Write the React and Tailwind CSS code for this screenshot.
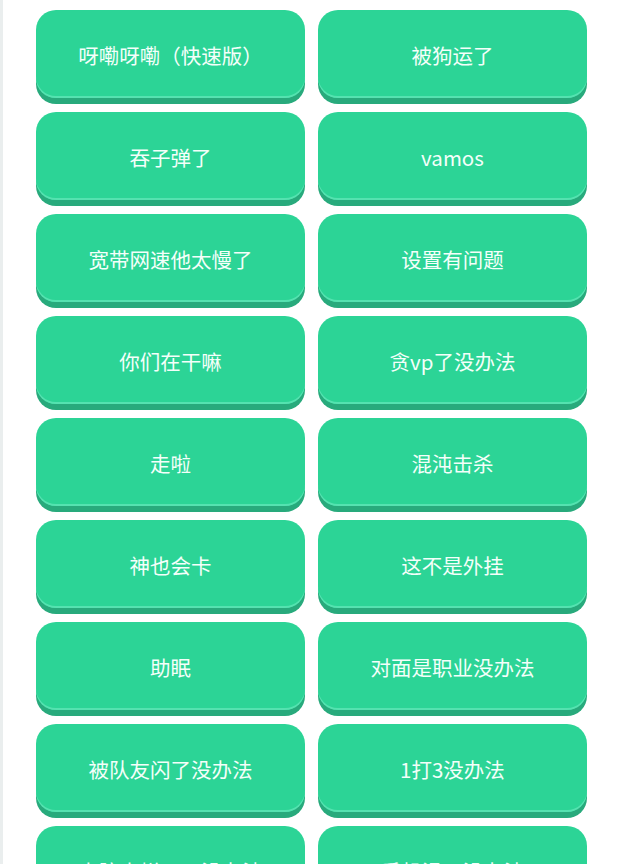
import React from "react";

const items = [
  "呀嘞呀嘞（快速版）", "被狗运了",
  "吞子弹了", "vamos",
  "宽带网速他太慢了", "设置有问题",
  "你们在干嘛", "贪vp了没办法",
  "走啦", "混沌击杀",
  "神也会卡", "这不是外挂",
  "助眠", "对面是职业没办法",
  "被队友闪了没办法", "1打3没办法",
  "电脑太烂了，没办法", "手机滑了没办法",
];

export default function App() {
  return (
    <div className="flex h-[864px] overflow-hidden bg-white">
      <div className="w-[3px] shrink-0 bg-[#eaeeee]" />
      <div className="pl-[33px] pt-[10px]">
        <div className="grid grid-cols-[269px_269px] gap-x-[13px] gap-y-[8px]">
          {items.map((t, i) => (
            <div
              key={i}
              className="h-[88px] rounded-[20px] bg-[#2cd496] shadow-[0_6px_0_#28aa7c,inset_0_-2px_0_#55e2b0] flex items-center justify-center pt-[2px] text-[20.5px] text-[#f4fffa] font-['Noto_Sans_CJK_SC','Noto_Sans',sans-serif] mb-[6px]"
            >
              {t}
            </div>
          ))}
        </div>
      </div>
    </div>
  );
}
